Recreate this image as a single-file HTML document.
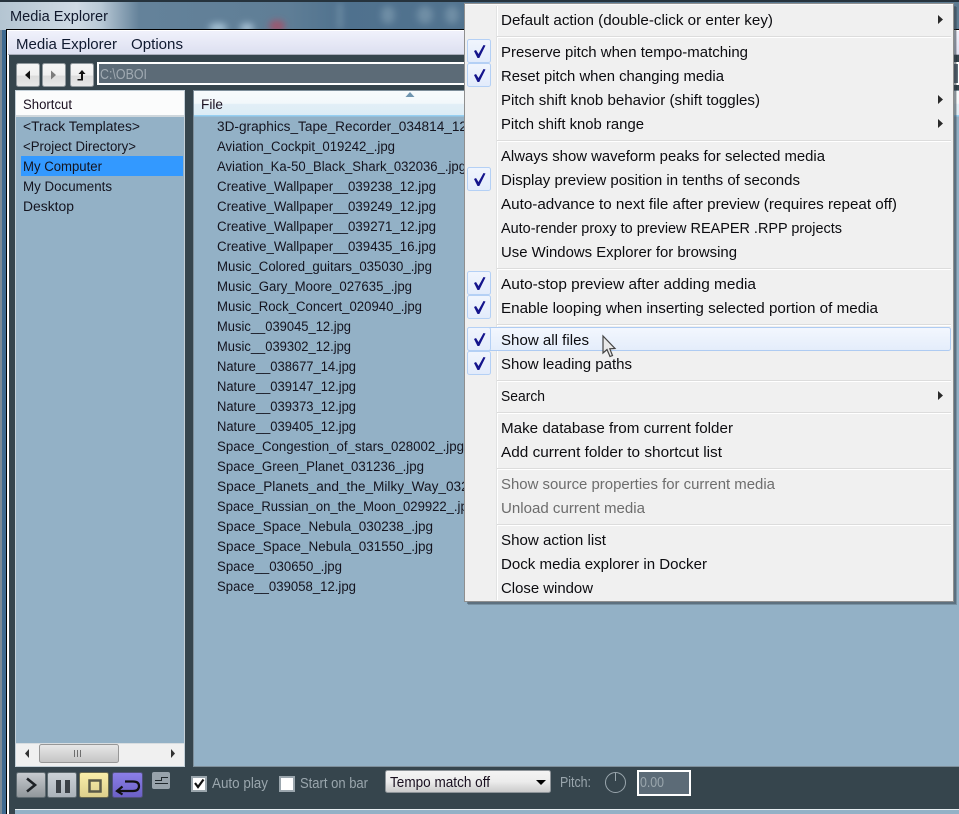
<!DOCTYPE html>
<html><head><meta charset="utf-8"><style>
html,body{margin:0;padding:0;background:#93b1c6;width:959px;height:814px;overflow:hidden}
svg{display:block;position:absolute;left:0;top:0}
text{font-family:"Liberation Sans",sans-serif;font-size:14.5px;dominant-baseline:auto;white-space:pre}
.m text{fill:#0c0c10}
.f text{fill:#14141f;font-size:13.5px}
</style></head><body>
<svg width="959" height="814" viewBox="0 0 959 814" xmlns="http://www.w3.org/2000/svg">
<defs>
<linearGradient id="tb" x1="0" x2="0" y1="0" y2="1"><stop offset="0" stop-color="#f0f1fb"/><stop offset="1" stop-color="#dcdff0"/></linearGradient>
<linearGradient id="glass" x1="0" x2="1" y1="0" y2="0"><stop offset="0" stop-color="#b4c5d2"/><stop offset=".08" stop-color="#cfdae4"/><stop offset=".105" stop-color="#b9c9d6"/><stop offset=".145" stop-color="#64829a"/><stop offset=".3" stop-color="#5f7e96"/><stop offset=".36" stop-color="#4f718e"/><stop offset="1" stop-color="#5e7c92"/></linearGradient>
<linearGradient id="btn" x1="0" x2="0" y1="0" y2="1"><stop offset="0" stop-color="#f5f5f5"/><stop offset=".5" stop-color="#f0f0f0"/><stop offset=".55" stop-color="#dcdcdc"/><stop offset="1" stop-color="#e8e8e8"/></linearGradient>
<linearGradient id="hd" x1="0" x2="0" y1="0" y2="1"><stop offset="0" stop-color="#f7fbfd"/><stop offset=".5" stop-color="#f2f8fb"/><stop offset=".52" stop-color="#e2eff7"/><stop offset="1" stop-color="#dcecf5"/></linearGradient>
<linearGradient id="gr" x1="0" x2="0" y1="0" y2="1"><stop offset="0" stop-color="#c8ccd0"/><stop offset="1" stop-color="#8f9599"/></linearGradient>
<linearGradient id="gr2" x1="0" x2="0" y1="0" y2="1"><stop offset="0" stop-color="#ccd2d8"/><stop offset="1" stop-color="#aab2b9"/></linearGradient>
<linearGradient id="yl" x1="0" x2="0" y1="0" y2="1"><stop offset="0" stop-color="#fbefaa"/><stop offset="1" stop-color="#dccf8c"/></linearGradient>
<linearGradient id="pu" x1="0" x2="0" y1="0" y2="1"><stop offset="0" stop-color="#8c80e8"/><stop offset="1" stop-color="#6a5fc4"/></linearGradient>
<linearGradient id="cb" x1="0" x2="0" y1="0" y2="1"><stop offset="0" stop-color="#f4f4f4"/><stop offset=".5" stop-color="#ececec"/><stop offset="1" stop-color="#c9c9c9"/></linearGradient>
<linearGradient id="th" x1="0" x2="0" y1="0" y2="1"><stop offset="0" stop-color="#e8e8e8"/><stop offset="1" stop-color="#c4c4c4"/></linearGradient>
<linearGradient id="chk" x1="0" x2="0" y1="0" y2="1"><stop offset="0" stop-color="#f0f5fd"/><stop offset="1" stop-color="#e2ebfb"/></linearGradient>
<linearGradient id="hl" x1="0" x2="0" y1="0" y2="1"><stop offset="0" stop-color="#f3f7fe"/><stop offset="1" stop-color="#e4edfb"/></linearGradient>
<clipPath id="fc"><rect x="194" y="117" width="272" height="640"/></clipPath>
<clipPath id="tc"><rect x="0" y="2" width="470" height="27"/></clipPath>
<filter id="bl" x="-50%" y="-50%" width="200%" height="200%"><feGaussianBlur stdDeviation="3.5"/></filter>
<path id="ck" d="M474 283 L476 282 L478.5 286 L483.5 277 L485.5 277.5 L479.3 290 L477.5 290 Z" fill="#14148c"/>
</defs>

<!-- glass frame -->
<rect width="959" height="814" fill="#3f6a90"/>
<rect x="0" y="1" width="959" height="29" fill="url(#glass)"/>
<rect x="0" y="0" width="959" height="2" fill="#26333d"/>
<rect x="0" y="30" width="2" height="784" fill="#7c8a96"/>
<g filter="url(#bl)" clip-path="url(#tc)">
<ellipse cx="218" cy="28" rx="9" ry="5" fill="#b4cfe2" opacity=".8"/>
<ellipse cx="247" cy="28" rx="7" ry="5" fill="#b5cfe2" opacity=".8"/>
<ellipse cx="277" cy="26" rx="8" ry="6" fill="#b04a62" opacity=".75"/>
<rect x="338" y="3" width="4" height="26" fill="#7a98ae" opacity=".8"/>
<ellipse cx="388" cy="15" rx="7" ry="9" fill="#84a0b4" opacity=".6"/>
<ellipse cx="425" cy="15" rx="8" ry="9" fill="#84a0b4" opacity=".6"/>
<ellipse cx="452" cy="15" rx="7" ry="9" fill="#84a0b4" opacity=".6"/>
</g>
<text x="10" y="21" textLength="98" lengthAdjust="spacingAndGlyphs" fill="#10182c" style="font-size:15px">Media Explorer</text>

<!-- client -->
<rect x="6" y="29" width="953" height="785" fill="#000"/>
<rect x="7" y="30" width="952" height="784" fill="#fff"/>
<rect x="9" y="32" width="950" height="782" fill="#36454d"/>
<rect x="8" y="31" width="951" height="24" fill="url(#tb)"/>
<rect x="8" y="54" width="951" height="1" fill="#a9adba"/>
<text x="16" y="49" textLength="101" lengthAdjust="spacingAndGlyphs" fill="#101a30" style="font-size:15px">Media Explorer</text>
<text x="131" y="49" textLength="52" lengthAdjust="spacingAndGlyphs" fill="#101a30" style="font-size:15px">Options</text>

<!-- nav -->
<rect x="16.5" y="63.5" width="23" height="23" rx="2" fill="url(#btn)" stroke="#8f979c"/>
<path d="M25 75 L30 70.5 V79.5 Z" fill="#111"/>
<rect x="42.5" y="63.5" width="23" height="23" rx="2" fill="url(#btn)" stroke="#8f979c"/>
<path d="M56 75 L51 70.5 V79.5 Z" fill="#7c7c7c"/>
<rect x="70.5" y="63.5" width="23" height="23" rx="2" fill="url(#btn)" stroke="#8f979c"/>
<path d="M82 70 L78.5 74 H81 V79 H77.5 V80.5 H83 V74 H85.5 Z" fill="#111"/>
<rect x="98" y="63" width="861" height="21" fill="#5c6b77" stroke="#fff" stroke-width="2"/>
<text x="100" y="79" textLength="47" lengthAdjust="spacingAndGlyphs" fill="#a0aab2" style="font-size:15px">C:\OBOI</text>

<!-- shortcut panel -->
<rect x="15.5" y="90.5" width="169" height="676" fill="#93b1c6" stroke="#c4d0d8"/>
<rect x="16" y="91" width="168" height="25" fill="#fbfcfc"/>
<rect x="16" y="115" width="168" height="2" fill="#cfd7dc"/>
<text x="23" y="109" textLength="49" lengthAdjust="spacingAndGlyphs" fill="#1a1020" style="font-size:13.5px">Shortcut</text>
<rect x="21" y="156" width="162" height="20" fill="#3399ff"/>
<g class="f">
<text x="23" y="131" textLength="117" lengthAdjust="spacingAndGlyphs">&lt;Track Templates&gt;</text>
<text x="23" y="151" textLength="113" lengthAdjust="spacingAndGlyphs">&lt;Project Directory&gt;</text>
<text x="23" y="171" textLength="79" lengthAdjust="spacingAndGlyphs">My Computer</text>
<text x="23" y="191" textLength="89" lengthAdjust="spacingAndGlyphs">My Documents</text>
<text x="23" y="211" textLength="51" lengthAdjust="spacingAndGlyphs">Desktop</text>
</g>
<rect x="16" y="743" width="168" height="23" fill="#f0f0f0"/>
<rect x="16" y="743" width="168" height="1" fill="#d8dde0"/>
<rect x="39.5" y="744.5" width="79" height="18" rx="2" fill="url(#th)" stroke="#979797"/>
<path d="M74.5 750v7M77.5 750v7M80.5 750v7" stroke="#6e6e6e" stroke-width="1"/>
<path d="M25 753.5 L29 749 V758 Z" fill="#333"/>
<path d="M175 753.5 L171 749 V758 Z" fill="#333"/>

<!-- file panel -->
<rect x="193.5" y="90.5" width="766" height="676" fill="#93b1c6" stroke="#7e8f9b"/>
<rect x="194" y="91" width="765" height="25" fill="url(#hd)"/>
<rect x="194" y="115" width="765" height="1.5" fill="#97d0f2"/>
<text x="201" y="109" textLength="22" lengthAdjust="spacingAndGlyphs" fill="#1a1020" style="font-size:13.5px">File</text>
<path d="M410 92 L405.5 97 H414.5 Z" fill="#6f95b0"/>
<g class="f" clip-path="url(#fc)">
<text x="217" y="131" textLength="272" lengthAdjust="spacingAndGlyphs">3D-graphics_Tape_Recorder_034814_12.jpg</text>
<text x="217" y="151" textLength="178" lengthAdjust="spacingAndGlyphs">Aviation_Cockpit_019242_.jpg</text>
<text x="217" y="171" textLength="249" lengthAdjust="spacingAndGlyphs">Aviation_Ka-50_Black_Shark_032036_.jpg</text>
<text x="217" y="191" textLength="219" lengthAdjust="spacingAndGlyphs">Creative_Wallpaper__039238_12.jpg</text>
<text x="217" y="211" textLength="219" lengthAdjust="spacingAndGlyphs">Creative_Wallpaper__039249_12.jpg</text>
<text x="217" y="231" textLength="219" lengthAdjust="spacingAndGlyphs">Creative_Wallpaper__039271_12.jpg</text>
<text x="217" y="251" textLength="219" lengthAdjust="spacingAndGlyphs">Creative_Wallpaper__039435_16.jpg</text>
<text x="217" y="271" textLength="215" lengthAdjust="spacingAndGlyphs">Music_Colored_guitars_035030_.jpg</text>
<text x="217" y="291" textLength="195" lengthAdjust="spacingAndGlyphs">Music_Gary_Moore_027635_.jpg</text>
<text x="217" y="311" textLength="205" lengthAdjust="spacingAndGlyphs">Music_Rock_Concert_020940_.jpg</text>
<text x="217" y="331" textLength="134" lengthAdjust="spacingAndGlyphs">Music__039045_12.jpg</text>
<text x="217" y="351" textLength="134" lengthAdjust="spacingAndGlyphs">Music__039302_12.jpg</text>
<text x="217" y="371" textLength="139" lengthAdjust="spacingAndGlyphs">Nature__038677_14.jpg</text>
<text x="217" y="391" textLength="139" lengthAdjust="spacingAndGlyphs">Nature__039147_12.jpg</text>
<text x="217" y="411" textLength="139" lengthAdjust="spacingAndGlyphs">Nature__039373_12.jpg</text>
<text x="217" y="431" textLength="139" lengthAdjust="spacingAndGlyphs">Nature__039405_12.jpg</text>
<text x="217" y="451" textLength="247" lengthAdjust="spacingAndGlyphs">Space_Congestion_of_stars_028002_.jpg</text>
<text x="217" y="471" textLength="207" lengthAdjust="spacingAndGlyphs">Space_Green_Planet_031236_.jpg</text>
<text x="217" y="491" textLength="304" lengthAdjust="spacingAndGlyphs">Space_Planets_and_the_Milky_Way_032036_.jpg</text>
<text x="217" y="511" textLength="258" lengthAdjust="spacingAndGlyphs">Space_Russian_on_the_Moon_029922_.jpg</text>
<text x="217" y="531" textLength="216" lengthAdjust="spacingAndGlyphs">Space_Space_Nebula_030238_.jpg</text>
<text x="217" y="551" textLength="216" lengthAdjust="spacingAndGlyphs">Space_Space_Nebula_031550_.jpg</text>
<text x="217" y="571" textLength="125" lengthAdjust="spacingAndGlyphs">Space__030650_.jpg</text>
<text x="217" y="591" textLength="139" lengthAdjust="spacingAndGlyphs">Space__039058_12.jpg</text>
</g>

<!-- transport -->
<rect x="16.5" y="772.5" width="29" height="25" rx="2" fill="url(#gr)" stroke="#5e6a70"/>
<path d="M27 778.5 L35 785 L27 791.5" fill="none" stroke="#1e2226" stroke-width="2.6"/>
<rect x="47.5" y="772.5" width="29" height="25" rx="2" fill="url(#gr2)" stroke="#5e6a70"/>
<rect x="56" y="780" width="5" height="13" fill="#3a4046"/><rect x="65" y="780" width="5" height="13" fill="#3a4046"/>
<rect x="79.5" y="772.5" width="29" height="25" rx="2" fill="url(#yl)" stroke="#6a6a50"/>
<rect x="89.5" y="780.5" width="11" height="11" fill="none" stroke="#5a5a48" stroke-width="2.5"/>
<rect x="112.5" y="772.5" width="30" height="25" rx="2" fill="url(#pu)" stroke="#50507a"/>
<path d="M125 781.5 H133 Q139 781.5 139 786 Q139 791 133 791 H118 M122.5 786.5 L117 791 L122.5 794.5" fill="none" stroke="#111" stroke-width="2.2"/>
<rect x="152" y="772" width="18" height="17" rx="2" fill="#98a3ab"/>
<path d="M155 780.5 H161.5 V777.5 H168 M155 783.5 H168" fill="none" stroke="#20282c" stroke-width="1"/>
<rect x="192" y="777" width="14" height="14" fill="#fff" stroke="#9ba6ad" stroke-width="2"/>
<path d="M195 783 L198 787 L203.5 779.5" fill="none" stroke="#111" stroke-width="2.2"/>
<text x="212" y="788" textLength="56" lengthAdjust="spacingAndGlyphs" fill="#9aa6ad" style="font-size:14.5px">Auto play</text>
<rect x="280" y="777" width="14" height="14" fill="#fff" stroke="#9ba6ad" stroke-width="2"/>
<text x="300" y="788" textLength="68" lengthAdjust="spacingAndGlyphs" fill="#9aa6ad" style="font-size:14.5px">Start on bar</text>
<rect x="385.5" y="770.5" width="165" height="22" rx="2" fill="url(#cb)" stroke="#8e9499"/>
<text x="390" y="787" textLength="100" lengthAdjust="spacingAndGlyphs" fill="#1a1020" style="font-size:14.5px">Tempo match off</text>
<path d="M536 780 H546 L541 785 Z" fill="#000"/>
<text x="560" y="787" textLength="31" lengthAdjust="spacingAndGlyphs" fill="#9aa6ad" style="font-size:14.5px">Pitch:</text>
<circle cx="615.5" cy="782.5" r="10" fill="none" stroke="#9aa6ad" stroke-width="1"/>
<path d="M615.5 772.5 V781" stroke="#9aa6ad" stroke-width="1"/>
<rect x="638" y="771" width="52" height="24" fill="#5c6b77" stroke="#fff" stroke-width="2"/>
<text x="640" y="787" textLength="24" lengthAdjust="spacingAndGlyphs" fill="#9aa6ad" style="font-size:14.5px">0.00</text>
<rect x="15" y="809" width="944" height="5" fill="#93b1c6"/>
<rect x="15" y="809" width="944" height="1" fill="#e8eef2"/>

<!-- menu -->
<rect x="468" y="7" width="489" height="598" fill="#000" opacity=".18"/>
<rect x="467" y="6" width="489" height="598" fill="#3c4a55" opacity=".45"/>
<rect x="464.5" y="3.5" width="489" height="598" fill="#f0f0f0" stroke="#8f8f8f"/>
<rect x="465" y="4" width="488" height="1" fill="#fff" opacity=".7"/>
<rect x="496" y="6" width="1" height="594" fill="#e2e3e3"/>
<rect x="497" y="6" width="1" height="594" fill="#fff"/>
<g fill="#dcdcdc">
<rect x="497" y="36" width="454" height="1"/><rect x="497" y="140" width="454" height="1"/><rect x="497" y="268" width="454" height="1"/><rect x="497" y="324" width="454" height="1"/><rect x="497" y="380" width="454" height="1"/><rect x="497" y="412" width="454" height="1"/><rect x="497" y="468" width="454" height="1"/><rect x="497" y="524" width="454" height="1"/>
</g>
<g fill="#fff">
<rect x="497" y="37" width="454" height="1"/><rect x="497" y="141" width="454" height="1"/><rect x="497" y="269" width="454" height="1"/><rect x="497" y="325" width="454" height="1"/><rect x="497" y="381" width="454" height="1"/><rect x="497" y="413" width="454" height="1"/><rect x="497" y="469" width="454" height="1"/><rect x="497" y="525" width="454" height="1"/>
</g>
<rect x="467.5" y="327.5" width="483" height="23" rx="2" fill="url(#hl)" stroke="#aecbf2"/>
<g fill="url(#chk)" stroke="#b4d0f5">
<rect x="467.5" y="39.5" width="23" height="23" rx="2"/>
<rect x="467.5" y="63.5" width="23" height="23" rx="2"/>
<rect x="467.5" y="167.5" width="23" height="23" rx="2"/>
<rect x="467.5" y="271.5" width="23" height="23" rx="2"/>
<rect x="467.5" y="295.5" width="23" height="23" rx="2"/>
<rect x="467.5" y="327.5" width="23" height="23" rx="2"/>
<rect x="467.5" y="351.5" width="23" height="23" rx="2"/>
</g>
<use href="#ck" y="-232"/><use href="#ck" y="-208"/><use href="#ck" y="-104"/><use href="#ck"/><use href="#ck" y="24"/><use href="#ck" y="56"/><use href="#ck" y="80"/>
<g fill="#2a2a2a">
<path d="M938 15 L943 19.5 L938 24 Z"/><path d="M938 95 L943 99.5 L938 104 Z"/><path d="M938 119 L943 123.5 L938 128 Z"/><path d="M938 391 L943 395.5 L938 400 Z"/>
</g>
<g class="m">
<text x="501" y="25" textLength="272" lengthAdjust="spacingAndGlyphs">Default action (double-click or enter key)</text>
<text x="501" y="57" textLength="247" lengthAdjust="spacingAndGlyphs">Preserve pitch when tempo-matching</text>
<text x="501" y="81" textLength="223" lengthAdjust="spacingAndGlyphs">Reset pitch when changing media</text>
<text x="501" y="105" textLength="259" lengthAdjust="spacingAndGlyphs">Pitch shift knob behavior (shift toggles)</text>
<text x="501" y="129" textLength="143" lengthAdjust="spacingAndGlyphs">Pitch shift knob range</text>
<text x="501" y="161" textLength="324" lengthAdjust="spacingAndGlyphs">Always show waveform peaks for selected media</text>
<text x="501" y="185" textLength="299" lengthAdjust="spacingAndGlyphs">Display preview position in tenths of seconds</text>
<text x="501" y="209" textLength="396" lengthAdjust="spacingAndGlyphs">Auto-advance to next file after preview (requires repeat off)</text>
<text x="501" y="233" textLength="341" lengthAdjust="spacingAndGlyphs">Auto-render proxy to preview REAPER .RPP projects</text>
<text x="501" y="257" textLength="236" lengthAdjust="spacingAndGlyphs">Use Windows Explorer for browsing</text>
<text x="501" y="289" textLength="255" lengthAdjust="spacingAndGlyphs">Auto-stop preview after adding media</text>
<text x="501" y="313" textLength="377" lengthAdjust="spacingAndGlyphs">Enable looping when inserting selected portion of media</text>
<text x="501" y="345" textLength="88" lengthAdjust="spacingAndGlyphs">Show all files</text>
<text x="501" y="369" textLength="131" lengthAdjust="spacingAndGlyphs">Show leading paths</text>
<text x="501" y="401" textLength="44" lengthAdjust="spacingAndGlyphs">Search</text>
<text x="501" y="433" textLength="232" lengthAdjust="spacingAndGlyphs">Make database from current folder</text>
<text x="501" y="457" textLength="221" lengthAdjust="spacingAndGlyphs">Add current folder to shortcut list</text>
<text x="501" y="489" textLength="274" lengthAdjust="spacingAndGlyphs" style="fill:#6d6d6d">Show source properties for current media</text>
<text x="501" y="513" textLength="144" lengthAdjust="spacingAndGlyphs" style="fill:#6d6d6d">Unload current media</text>
<text x="501" y="545" textLength="105" lengthAdjust="spacingAndGlyphs">Show action list</text>
<text x="501" y="569" textLength="206" lengthAdjust="spacingAndGlyphs">Dock media explorer in Docker</text>
<text x="501" y="593" textLength="92" lengthAdjust="spacingAndGlyphs">Close window</text>
</g>
<!-- cursor -->
<path d="M603 336 V353 L607 349.5 L610 356.5 L612.5 355.5 L609.8 348.8 L615 348.5 Z" fill="#e8e8e8" stroke="#444" stroke-width="1.2"/>
</svg>
</body></html>
